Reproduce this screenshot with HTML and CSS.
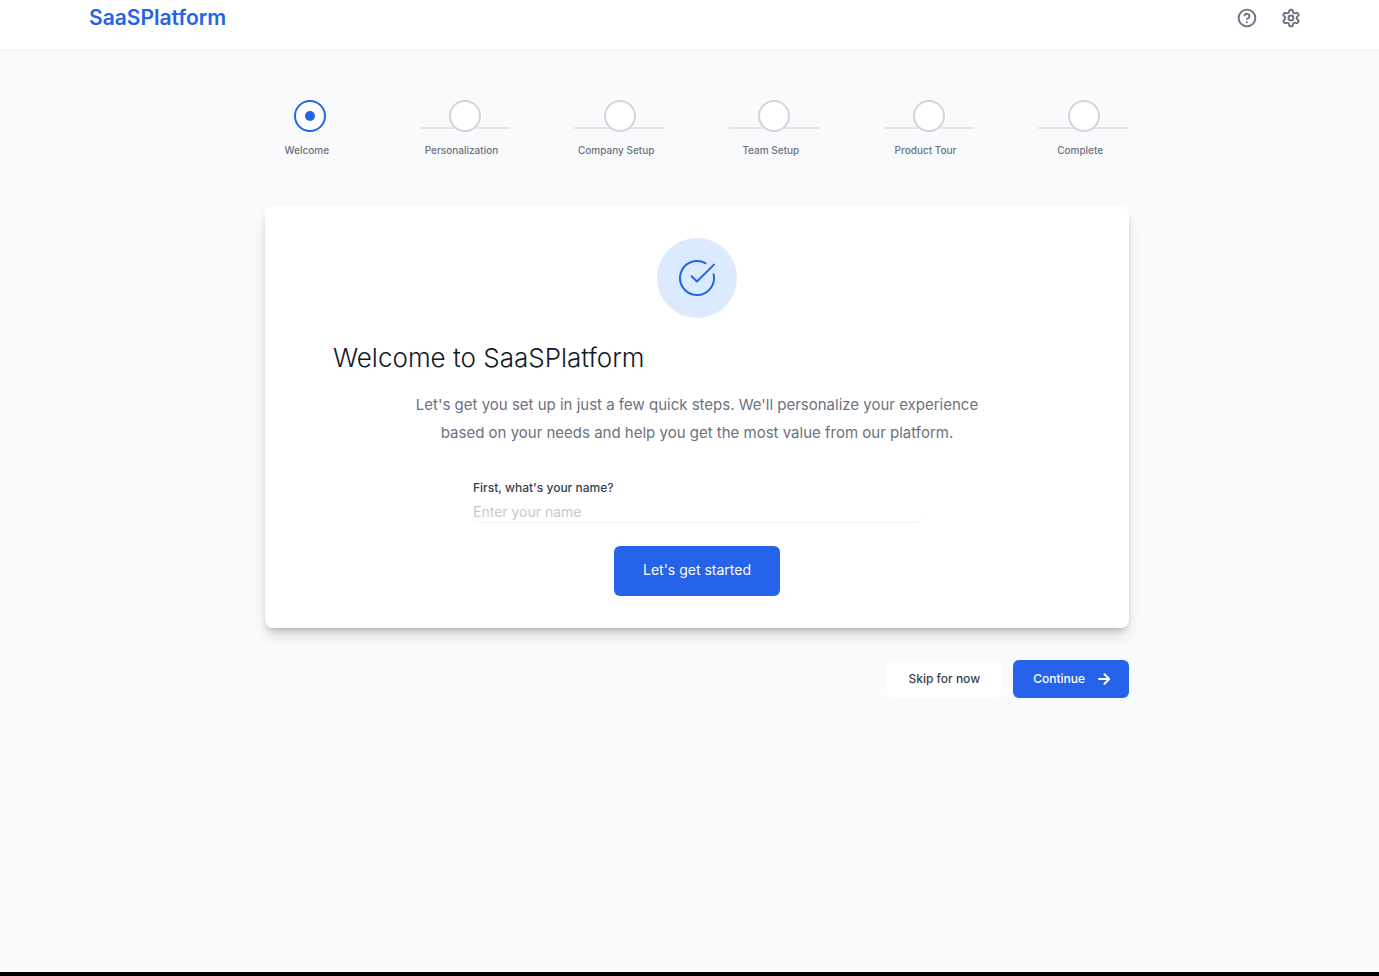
FILE: index.html
```html
<!DOCTYPE html>
<html lang="en">
<head>
<meta charset="utf-8">
<meta name="viewport" content="width=device-width, initial-scale=1">
<title>SaaSPlatform</title>
<link rel="stylesheet" href="styles.css">
</head>
<body class="page">
<header class="header">
  <a class="logo" href="#">SaaSPlatform</a>
  <div class="header-actions">
    <button class="icon-button" type="button" aria-label="Help">
      <svg class="icon" viewBox="0 0 24 24"><circle cx="12" cy="12" r="10"/><path d="M9.09 9a3 3 0 0 1 5.83 1c0 2-3 3-3 3"/><path d="M12 17h.01"/></svg>
    </button>
    <button class="icon-button" type="button" aria-label="Settings">
      <svg class="icon" viewBox="0 0 24 24"><path d="M12.22 2h-.44a2 2 0 0 0-2 2v.18a2 2 0 0 1-1 1.73l-.43.25a2 2 0 0 1-2 0l-.15-.08a2 2 0 0 0-2.73.73l-.22.38a2 2 0 0 0 .73 2.73l.15.1a2 2 0 0 1 1 1.72v.51a2 2 0 0 1-1 1.74l-.15.09a2 2 0 0 0-.73 2.73l.22.38a2 2 0 0 0 2.73.73l.15-.08a2 2 0 0 1 2 0l.43.25a2 2 0 0 1 1 1.73V20a2 2 0 0 0 2 2h.44a2 2 0 0 0 2-2v-.18a2 2 0 0 1 1-1.73l.43-.25a2 2 0 0 1 2 0l.15.08a2 2 0 0 0 2.73-.73l.22-.39a2 2 0 0 0-.73-2.73l-.15-.08a2 2 0 0 1-1-1.74v-.5a2 2 0 0 1 1-1.74l.15-.09a2 2 0 0 0 .73-2.73l-.22-.38a2 2 0 0 0-2.73-.73l-.15.08a2 2 0 0 1-2 0l-.43-.25a2 2 0 0 1-1-1.73V4a2 2 0 0 0-2-2z"/><circle cx="12" cy="12" r="3"/></svg>
    </button>
  </div>
</header>
<main class="main">
  <div class="content">
    <ol class="steps">
      <li class="step step-active"><span class="step-track"><span class="step-circle"></span></span><span class="step-label">Welcome</span></li>
      <li class="step"><span class="step-track"><span class="step-circle"></span></span><span class="step-label">Personalization</span></li>
      <li class="step"><span class="step-track"><span class="step-circle"></span></span><span class="step-label">Company Setup</span></li>
      <li class="step"><span class="step-track"><span class="step-circle"></span></span><span class="step-label">Team Setup</span></li>
      <li class="step"><span class="step-track"><span class="step-circle"></span></span><span class="step-label">Product Tour</span></li>
      <li class="step"><span class="step-track"><span class="step-circle"></span></span><span class="step-label">Complete</span></li>
    </ol>
    <section class="card">
      <div class="badge">
        <svg class="badge-icon" viewBox="0 0 40 40"><path d="M28.4 5.2A17 17 0 1 0 36.6 16.3"/><path d="M14.6 18.2l5.4 5.3L37 6.6"/></svg>
      </div>
      <h1 class="title">Welcome to SaaSPlatform</h1>
      <p class="intro">Let's get you set up in just a few quick steps. We'll personalize your experience based on your needs and help you get the most value from our platform.</p>
      <form class="form">
        <label class="label" for="name">First, what's your name?</label>
        <input class="input" id="name" type="text" placeholder="Enter your name">
        <button class="button button-large" type="button">Let's get started</button>
      </form>
    </section>
    <div class="actions">
      <button class="button button-plain" type="button">Skip for now</button>
      <button class="button button-next" type="button">Continue
        <svg class="arrow" viewBox="0 0 14 14"><path d="M2 7h10M7.5 2.2L12.2 7l-4.7 4.8"/></svg>
      </button>
    </div>
  </div>
</main>
</body>
</html>
```

FILE: styles.css
```css
* { box-sizing: border-box; }
.page {
  margin: 0;
  min-height: 100vh;
  background: #f9fafc;
  border-bottom: 4px solid #000;
  font-family: Inter, "Liberation Sans", sans-serif;
  color: #111827;
}
button, input { font: inherit; }
.header {
  display: flex;
  justify-content: space-between;
  align-items: flex-start;
  height: 51px;
  padding: 4px 78px 0 89px;
  background: #fff;
  border-bottom: 1px solid #eff0f3;
}
.logo {
  color: #2563eb;
  font-size: 21px;
  font-weight: 600;
  line-height: 28px;
  text-decoration: none;
}
.header-actions { display: flex; gap: 24px; padding-top: 4px; }
.icon-button {
  width: 20px;
  height: 20px;
  padding: 0;
  border: 0;
  background: none;
  color: #6b7280;
}
.icon {
  display: block;
  width: 20px;
  height: 20px;
  fill: none;
  stroke: currentColor;
  stroke-width: 2.3;
  stroke-linecap: round;
  stroke-linejoin: round;
}
.main { padding: 49px 0 0 15px; }
.content { max-width: 864px; margin: 0 auto; }
.steps {
  display: grid;
  grid-template-columns: repeat(6, 1fr);
  gap: 64px;
  margin: 0 0 48px;
  padding: 0;
  list-style: none;
}
.step-track {
  display: flex;
  justify-content: center;
  margin-bottom: 10px;
  background: linear-gradient(#e5e7eb, #e5e7eb) 0 27px / 100% 2px no-repeat;
}
.step-active .step-track { background: none; }
.step-circle {
  display: flex;
  align-items: center;
  justify-content: center;
  width: 32px;
  height: 32px;
  border: 2px solid #d1d5db;
  border-radius: 50%;
  background: #fff;
}
.step-active .step-circle { border-color: #2563eb; }
.step-active .step-circle::after {
  content: "";
  width: 10px;
  height: 10px;
  border-radius: 50%;
  background: #2563eb;
}
.step-label {
  display: block;
  padding-right: 7px;
  color: #6b7280;
  font-size: 10px;
  font-weight: 500;
  line-height: 16px;
  text-align: center;
  white-space: nowrap;
}
.card {
  padding: 32px 68px;
  border-radius: 8px;
  background: #fff;
  box-shadow: 0 10px 15px -3px rgba(0, 0, 0, .14), 0 4px 6px -2px rgba(0, 0, 0, .2);
}
.badge {
  display: flex;
  align-items: center;
  justify-content: center;
  width: 80px;
  height: 80px;
  margin: 0 auto 24px;
  border-radius: 50%;
  background: #dbeafe;
}
.badge-icon {
  width: 40px;
  height: 40px;
  fill: none;
  stroke: #2563eb;
  stroke-width: 2;
  stroke-linecap: round;
  stroke-linejoin: round;
}
.title {
  margin: 0 0 17px;
  font-size: 26px;
  font-weight: 300;
  line-height: 32px;
}
.intro {
  max-width: 576px;
  margin: 0 auto 31px;
  color: #6b7280;
  font-size: 15px;
  font-weight: 400;
  line-height: 28px;
  text-align: center;
}
.form {
  display: flex;
  flex-direction: column;
  max-width: 448px;
  margin: 0 auto;
}
.label {
  color: #374151;
  font-size: 12px;
  font-weight: 500;
  line-height: 20px;
  margin-bottom: 4px;
}
.input {
  height: 20px;
  margin-bottom: 24px;
  padding: 0 0 2px;
  border: 0;
  border-radius: 6px;
  background: #fff;
  box-shadow: 0 1px 1px rgba(0, 0, 0, .06);
  color: #111827;
  font-size: 14px;
}
.input::placeholder { color: #c9c9c9; }
.button {
  border: 0;
  border-radius: 6px;
  background: #2563eb;
  color: #fff;
  font-size: 12px;
  font-weight: 500;
  line-height: 18px;
}
.button-large {
  align-self: center;
  padding: 15px 29px 17px;
  font-size: 14px;
  font-weight: 400;
}
.actions {
  display: flex;
  justify-content: flex-end;
  gap: 12px;
  margin-top: 32px;
}
.button-plain {
  padding: 10px 21px;
  background: #fff;
  color: #374151;
}
.button-next {
  display: flex;
  align-items: center;
  gap: 12px;
  padding: 10px 18px 10px 20px;
}
.arrow {
  width: 14px;
  height: 14px;
  fill: none;
  stroke: currentColor;
  stroke-width: 2;
  stroke-linecap: round;
  stroke-linejoin: round;
}
```
